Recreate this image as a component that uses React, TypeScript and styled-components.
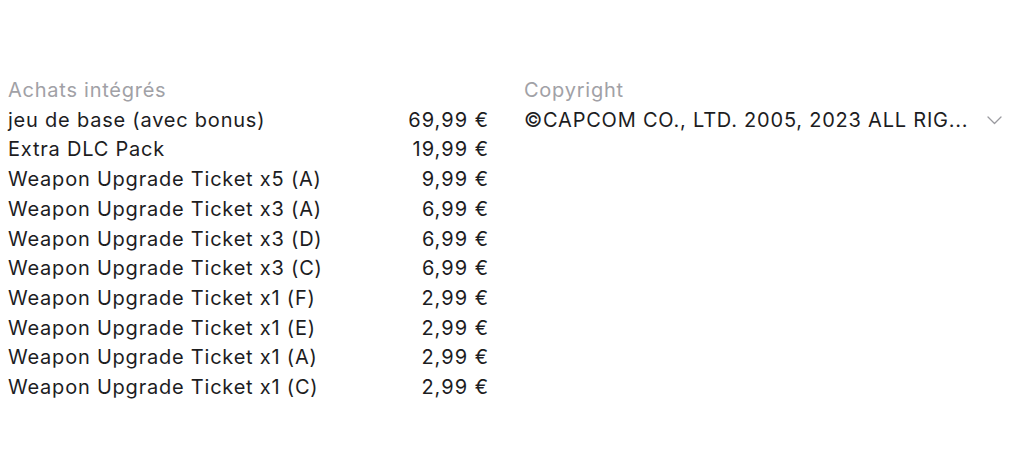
import React from "react";
import styled, { createGlobalStyle } from "styled-components";

const Global = createGlobalStyle`
  html, body { margin: 0; padding: 0; background: #fff; }
  body { font-family: Inter, "Noto Sans", sans-serif; -webkit-font-smoothing: antialiased; }
`;

const Page = styled.div`
  display: flex;
  gap: 36px;
  padding: 76px 22px 0 8px;
  width: 1024px;
  box-sizing: border-box;
`;

const Column = styled.div<{ $w?: number }>`
  display: flex;
  flex-direction: column;
  width: ${(p) => (p.$w ? `${p.$w}px` : "auto")};
  flex: ${(p) => (p.$w ? "none" : "1")};
  min-width: 0;
`;

const Label = styled.div`
  font-size: 20px;
  line-height: 29.7px;
  color: #a1a1a6;
  letter-spacing: 0.75px;
`;

const Row = styled.div`
  display: flex;
  justify-content: space-between;
  align-items: center;
  font-size: 20px;
  line-height: 29.7px;
  color: #1d1d1f;
  letter-spacing: 0.78px;
`;

const Price = styled.span`
  letter-spacing: 1px;
  margin-right: -1px;
`;

const Value = styled.span`
  white-space: nowrap;
  overflow: hidden;
  text-overflow: ellipsis;
`;

const Chevron = styled.svg`
  width: 15px;
  height: 9px;
  flex: none;
`;

const items: [string, string][] = [
  ["jeu de base (avec bonus)", "69,99 €"],
  ["Extra DLC Pack", "19,99 €"],
  ["Weapon Upgrade Ticket x5 (A)", "9,99 €"],
  ["Weapon Upgrade Ticket x3 (A)", "6,99 €"],
  ["Weapon Upgrade Ticket x3 (D)", "6,99 €"],
  ["Weapon Upgrade Ticket x3 (C)", "6,99 €"],
  ["Weapon Upgrade Ticket x1 (F)", "2,99 €"],
  ["Weapon Upgrade Ticket x1 (E)", "2,99 €"],
  ["Weapon Upgrade Ticket x1 (A)", "2,99 €"],
  ["Weapon Upgrade Ticket x1 (C)", "2,99 €"],
];

export default function App() {
  return (
    <>
      <Global />
      <Page>
        <Column $w={480}>
          <Label>Achats intégrés</Label>
          {items.map(([n, p], i) => (
            <Row key={i}>
              <span>{n}</span>
              <Price>{p}</Price>
            </Row>
          ))}
        </Column>
        <Column>
          <Label>Copyright</Label>
          <Row>
            <Value>©CAPCOM CO., LTD. 2005, 2023 ALL RIG...</Value>
            <Chevron viewBox="0 0 15 9">
              <path d="M1 1 L7.5 7.5 L14 1" fill="none" stroke="#9a9a9f" strokeWidth="1.3" strokeLinecap="round" strokeLinejoin="round" />
            </Chevron>
          </Row>
        </Column>
      </Page>
    </>
  );
}
